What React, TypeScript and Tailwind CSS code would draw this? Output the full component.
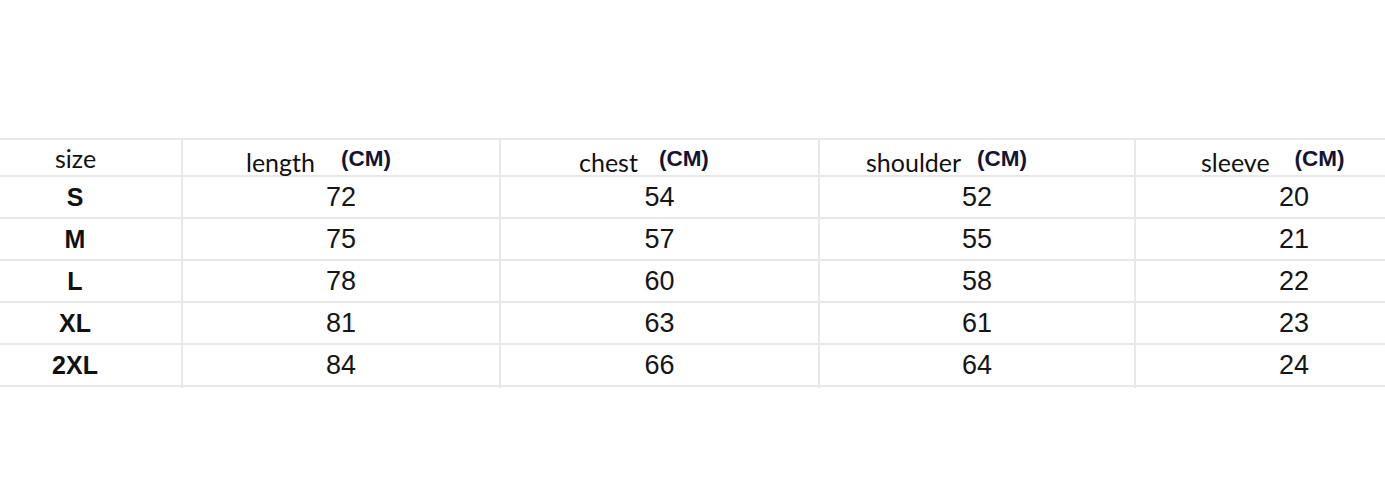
const columns = [
  { label: "length", pad: "pl-[63px]", gap: "ml-[26px]" },
  { label: "chest", pad: "pl-[78px]", gap: "ml-[21px]" },
  { label: "shoulder", pad: "pl-[46px]", gap: "ml-[16px]" },
  { label: "sleeve", pad: "pl-[65px]", gap: "ml-[25px]" },
];

const rows = [
  { size: "S", values: [72, 54, 52, 20] },
  { size: "M", values: [75, 57, 55, 21] },
  { size: "L", values: [78, 60, 58, 22] },
  { size: "XL", values: [81, 63, 61, 23] },
  { size: "2XL", values: [84, 66, 64, 24] },
];

const grid = "grid grid-cols-[181px_318px_319px_316px_318px]";

export default function App() {
  return (
    <div className="h-[500px] w-[1385px] overflow-hidden bg-white">
      <div className="pt-[138px]">
        <div className="w-[1452px] border-t-2 border-[#e8e8e8]">
          {/* header */}
          <div className={`${grid} h-[37px] border-b-2 border-[#e8e8e8]`}>
            <div className="flex items-end pb-[4px] pl-[55px] font-['Lato',sans-serif] text-[25px] leading-none text-[#111]">
              size
            </div>
            {columns.map((col) => (
              <div
                key={col.label}
                className={`flex items-start border-l-2 border-[#e8e8e8] ${col.pad}`}
              >
                <span className="mt-[10px] font-['Lato',sans-serif] text-[25px] leading-none text-[#111]">
                  {col.label}
                </span>
                <span className={`mt-[8px] ${col.gap} font-['Liberation_Sans',Arial,sans-serif] text-[22.5px] font-bold leading-none text-[#141430]`}>
                  (CM)
                </span>
              </div>
            ))}
          </div>

          {rows.map((row) => (
            <div key={row.size} className={`${grid} h-[42px] border-b-2 border-[#e8e8e8]`}>
              <div className="flex items-center justify-center pr-[31px] pb-[2px] font-['Liberation_Sans',Arial,sans-serif] text-[25px] font-bold text-[#111]">
                {row.size}
              </div>
              {row.values.map((v, i) => (
                <div
                  key={i}
                  className="flex items-center justify-center border-l-2 border-[#e8e8e8] pb-[2px] font-['Liberation_Sans',Arial,sans-serif] text-[27px] text-[#161616]"
                >
                  {v}
                </div>
              ))}
            </div>
          ))}
        </div>
      </div>
    </div>
  );
}
